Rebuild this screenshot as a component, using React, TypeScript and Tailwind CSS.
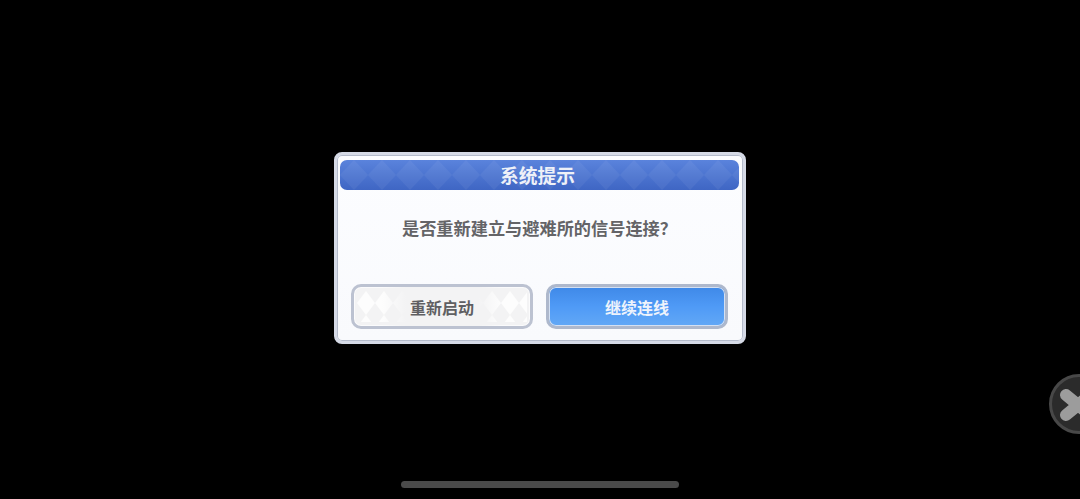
const font = "[font-family:'Noto_Sans_CJK_SC','Noto_Sans',sans-serif]";

function Diamonds({ id, color, size, height, opacity }: { id: string; color: string; size: number; height: number; opacity: number }) {
  return (
    <svg className="absolute inset-0 h-full w-full" aria-hidden="true">
      <defs>
        <pattern id={id} width={size} height={height} patternUnits="userSpaceOnUse">
          <path d={`M${size / 2} 0L${size} ${height / 2}L${size / 2} ${height}L0 ${height / 2}Z`} fill={color} fillOpacity={opacity} />
        </pattern>
      </defs>
      <rect width="100%" height="100%" fill={`url(#${id})`} />
    </svg>
  );
}

export default function App() {
  return (
    <div className={`relative h-[499px] w-[1080px] overflow-hidden bg-black pt-[152px] ${font}`}>
      <div className="mx-auto h-[192px] w-[412px] rounded-[8px] border-[3px] border-[#d5dae6] bg-gradient-to-b from-[#fcfdff] to-[#f9fafd] px-[3px] pt-[5px] shadow-[inset_0_0_0_1px_#b4bbcb]">
        <div className="relative mr-[1px] flex h-[30px] items-center justify-center overflow-hidden rounded-[7px] bg-gradient-to-b from-[#5a83dc] to-[#3f66c4] pr-[4px]">
          <Diamonds id="head" color="#ffffff" size={28} height={30} opacity={0.05} />
          <span className="relative text-[18.8px] font-bold leading-none text-[#eef1f8]">系统提示</span>
        </div>
        <p className="mt-[28px] pr-[1px] text-center text-[17.2px] font-bold leading-[20px] text-[#646467]">
          是否重新建立与避难所的信号连接？
        </p>
        <div className="mt-[46px] flex gap-[13px] pl-[11px]">
          <div className="relative flex h-[45px] w-[182px] items-center justify-center overflow-hidden rounded-[10px] border-[3px] border-[#bcc2d1] bg-[#f3f3f4] shadow-[inset_0_0_0_1px_#fbfbfc]">
            <div className="absolute inset-x-[3px] inset-y-[4px]">
              <Diamonds id="btn" color="#ffffff" size={18} height={24} opacity={0.8} />
            </div>
            <div className="absolute inset-y-0 left-[28px] right-[28px] bg-[linear-gradient(90deg,transparent,#f3f3f4_20%,#f3f3f4_80%,transparent)]" />
            <span className="relative pt-[1px] text-[16px] font-bold text-[#5f5f62]">重新启动</span>
          </div>
          <div className="relative flex h-[45px] w-[182px] items-center justify-center overflow-hidden rounded-[10px] border-[3px] border-[#aeb8cc] bg-gradient-to-b from-[#3f89e8] via-[#4f9af6] to-[#62a8f6] shadow-[inset_0_0_0_1px_#d4e0f2]">
            <span className="relative pt-[1px] text-[16px] font-bold text-[#eef3fc]">继续连线</span>
          </div>
        </div>
      </div>

      <div className="absolute left-[1049px] top-[374px] h-[60px] w-[60px] rounded-full border-[3px] border-[#484848] bg-[#2b2b2b]">
        <svg className="absolute left-[5px] top-[5px]" width="44" height="44" viewBox="0 0 44 44" aria-hidden="true">
          <path d="M9 13 L33 33 M9 33 L33 13" stroke="#9c9c9c" strokeWidth="12" strokeLinecap="round" />
        </svg>
      </div>
      <div className="absolute left-[401px] top-[481px] h-[7px] w-[278px] rounded-full bg-[#4a4a4a]" />
    </div>
  );
}
